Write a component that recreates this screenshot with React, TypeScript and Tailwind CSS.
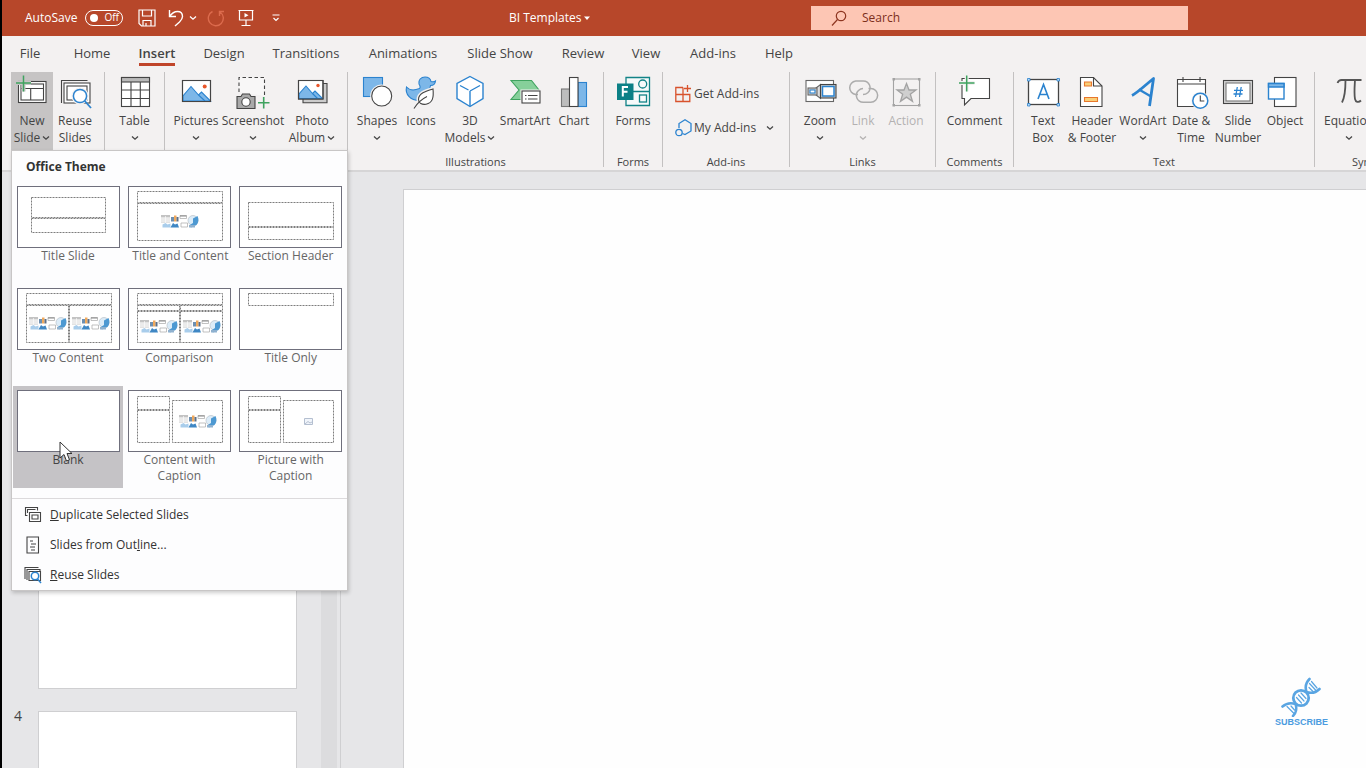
import React from "react";

const INK = "#444444";
const BLUE = "#2b83cf";
const SKY = "#7db7e8";
const GREEN = "#3fa35f";

function Icon({ children }: { children: React.ReactNode }) {
  return (
    <svg aria-hidden="true" className="h-9 w-[34px] shrink-0 overflow-visible" viewBox="0 0 34 36" fill="none" stroke={INK} strokeWidth="1.1">
      {children}
    </svg>
  );
}

const icons = {
  newSlide: (
    <Icon>
      <rect x="3.5" y="7.5" width="27.5" height="21" fill="#fff" />
      <rect x="6" y="10" width="22.5" height="16" />
      <path d="M6 14.5h22.5M15.7 14.5V26" />
      <path d="M8.5 1.5v16M1 9h15" stroke="#c6c4c4" strokeWidth="4" />
      <path d="M8.5 1.5v16M1 9h15" stroke={GREEN} strokeWidth="1.5" />
    </Icon>
  ),
  reuse: (
    <Icon>
      <path d="M3.5 29V6.5h26" />
      <rect x="6" y="9" width="26" height="20" fill="#fff" />
      <rect x="9" y="12" width="20" height="14" />
      <circle cx="22" cy="22" r="8" fill="#f3f1f1" stroke="#f3f1f1" />
      <circle cx="22" cy="22" r="6.6" fill="#fff" stroke={BLUE} strokeWidth="1.5" />
      <path d="M26.8 27l6.2 7" stroke={BLUE} strokeWidth="1.8" />
    </Icon>
  ),
  table: (
    <Icon>
      <rect x="3.5" y="3.5" width="28" height="29" fill="#fff" />
      <rect x="3.5" y="3.5" width="28" height="4.5" fill="#b9b9b9" />
      <path d="M13 8v24.5M22.3 8v24.5M3.5 16h28M3.5 24.5h28" />
    </Icon>
  ),
  pictures: (
    <Icon>
      <rect x="3.5" y="6.5" width="28" height="21" fill="#fff" />
      <path d="M4 27V22l8-9.500 7.500 8.500 3-3 9 9z" fill={SKY} stroke={BLUE} />
      <path d="M19.500 21l6.500 6" stroke={BLUE} />
      <path d="M3.5 6.500h28v21H3.500z" />
      <circle cx="25.700" cy="12.500" r="2" fill="#e8562a" stroke="none" />
    </Icon>
  ),
  screenshot: (
    <Icon>
      <path d="M3 18V3.500h25.500V22" strokeDasharray="3.500 2.500" fill="#f8f7f7" />
      <path d="M1 22.500h4l1.500-2.500h7l1.500 2.500h4v12H1z" fill="#a9a9a9" />
      <circle cx="10" cy="28" r="4.200" fill="#fff" />
      <path d="M27.700 23v11.500M22 28.700h11.500" stroke={GREEN} strokeWidth="1.600" />
    </Icon>
  ),
  album: (
    <Icon>
      <path d="M8 25v3.700h24V9.500h-4" fill="#ccc" />
      <rect x="3.500" y="6.500" width="24.500" height="18.500" fill="#fff" />
      <path d="M4 24.500V20l7-8 6.500 7.500 2.500-2.500 7.500 7.500z" fill={SKY} stroke={BLUE} />
      <path d="M17.500 19.500l5 5" stroke={BLUE} />
      <path d="M3.500 6.500h24.500v18.500H3.500z" />
      <circle cx="23" cy="11.500" r="1.700" fill="#e8562a" stroke="none" />
    </Icon>
  ),
  shapes: (
    <Icon>
      <rect x="3.500" y="3.500" width="19" height="19" fill={SKY} stroke={BLUE} />
      <circle cx="21.700" cy="22" r="11.500" fill="#f3f1f1" stroke="none" />
      <circle cx="21.700" cy="22" r="10" fill="#fff" />
    </Icon>
  ),
  duck: (
    <Icon>
      <path d="M15 10c-1-4 2-7 6-7 3.500 0 5.500 2 6 4.500 2 .5 3.500.3 4.500-.5-.3 3-2.500 4.500-5 4.500-1 2-1 3 0 5 1 6-4 10-11 10C6 26.500 1 20 2.500 13c3 3.500 8 3.500 13 1.500 1-.8 1-2-.5-4.500z" fill={SKY} stroke={BLUE} />
      <path d="M29.500 15c.8 8 0 14-7 15.500-4 .8-8-1-8-5 0-6 7-8.500 15-10.500z" fill="#fff" stroke="#f3f1f1" strokeWidth="4" />
      <path d="M29 15c.8 8 0 14-7 15.200-4 .6-7.500-1-7.500-4.700 0-6 7-8.300 14.500-10.500z" fill="#fff" />
      <path d="M10 34.500c3-5 7-9 13-12" />
    </Icon>
  ),
  cube: (
    <Icon>
      <path d="M17 2.500l13 7v15l-13 8-13-8v-15z" fill="#fff" stroke={BLUE} strokeWidth="1.400" />
      <path d="M7 11.500l8.500 4.500M27 11.500l-10 5.500M17 17v15" stroke={BLUE} strokeWidth="1.400" />
    </Icon>
  ),
  smartArt: (
    <Icon>
      <path d="M3 6.500h20.500L31 16l-7.500 9.500H3l8-9.500z" fill="#86d09a" stroke={GREEN} />
      <rect x="12.500" y="15.500" width="21" height="15.500" fill="#f3f1f1" stroke="none" />
      <rect x="14" y="17" width="18" height="12" fill="#fff" />
      <path d="M17 21.500h1.500M20 21.500h9.500M17 25h1.500M20 25h9.500" />
    </Icon>
  ),
  chart: (
    <Icon>
      <rect x="4.500" y="15" width="8" height="17.500" fill="#bdbdbd" stroke="#777" />
      <rect x="21" y="8.500" width="8.500" height="24" fill={SKY} stroke={BLUE} />
      <rect x="12.500" y="3.500" width="8.500" height="29" fill="#fff" />
    </Icon>
  ),
  forms: (
    <Icon>
      <g stroke="#128387" strokeWidth="1.300">
        <path d="M10 3.500h23.500v28H10zM17 17.500h16.500" fill="#f6fafa" />
        <circle cx="26.700" cy="10" r="4" />
        <rect x="23.500" y="21" width="7" height="7" />
      </g>
      <rect x="1" y="9.500" width="16.500" height="16.500" fill="#0c8086" stroke="none" />
      <path d="M6.800 22.500V13H12M6.800 17.700h4.700" stroke="#fff" strokeWidth="2" />
    </Icon>
  ),
  zoom: (
    <Icon>
      <rect x="3" y="6.500" width="27.500" height="21" fill="#fff" stroke="#666" />
      <path d="M13 14l4.500-3.500v14L13 21z" fill="#ddd" stroke="#666" />
      <rect x="5" y="14" width="9" height="7" fill="#ccc" stroke="#666" />
      <rect x="7" y="16" width="5" height="3" fill="#fff" stroke={BLUE} />
      <rect x="17.500" y="10.500" width="15.500" height="13.500" fill="#ccc" />
      <rect x="19.500" y="12.500" width="11.500" height="9.500" fill="#fff" stroke={BLUE} strokeWidth="1.500" />
    </Icon>
  ),
  link: (
    <Icon>
      <g stroke="#acacac" strokeWidth="1.500">
        <path d="M12 20.500H9.700A6.800 6.800 0 0 1 9.700 7h7.600a6.700 6.700 0 0 1 4.500 11.700c-1.400 1.200-2.800 1.800-4.800 1.800" />
        <path d="M22.500 14.500h2.300a6.800 6.800 0 0 1 0 13.700h-7.600A6.800 6.800 0 0 1 12.500 16.500c1.400-1.300 2.800-2 4.500-2" />
      </g>
    </Icon>
  ),
  action: (
    <Icon>
      <g stroke="#a3a3a3">
        <rect x="4.500" y="5" width="26" height="26.500" />
        <path d="M17.500 9.500l2.500 6.500h7l-5.700 4.300 2.200 7-6-4.200-6 4.200 2.200-7L8 16h7z" fill="#cfcfcf" strokeWidth="1.300" />
        <path d="M3.500 4h2.500v2.500H3.500zM29 4h2.500v2.500H29zM3.500 30h2.500v2.500H3.500zM29 30h2.500v2.500H29z" fill="#a3a3a3" stroke="none" />
      </g>
    </Icon>
  ),
  comment: (
    <Icon>
      <path d="M4 4.500h27.500v20H13l-6.500 6.500v-6.500H4z" fill="#fff" />
      <path d="M8.700 1.500v16M1 9h15.500" stroke="#f3f1f1" strokeWidth="4" />
      <path d="M8.700 1.500v16M1 9h15.500" stroke={GREEN} strokeWidth="1.500" />
    </Icon>
  ),
  textBox: (
    <Icon>
      <rect x="2.500" y="5.500" width="30" height="25" fill="#fff" strokeWidth="1.300" />
      <path d="M12 25l5.500-14.500L23 25M13.800 20.500h7.400" stroke={BLUE} strokeWidth="1.600" />
      <path d="M1.500 4.500h2.500v2.500H1.500zM31 4.500h2.500v2.500H31zM1.500 29.500h2.500v2.500H1.500zM31 29.500h2.500v2.500H31z" fill="#b8daf6" stroke={BLUE} strokeWidth="0.800" />
    </Icon>
  ),
  headerFooter: (
    <Icon>
      <path d="M5.500 3.500h13l8.500 8.500v20.500H5.500z" fill="#fff" />
      <path d="M18.500 3.500V12H27" />
      <path d="M9.500 8h7v4h-7zM9.500 23.500h13v4h-13z" fill="#f9cf78" stroke="#e8762c" />
    </Icon>
  ),
  wordArt: (
    <Icon>
      <path d="M6 21.500C11 19 19 11.500 27.500 4.500L23.500 32" stroke={BLUE} strokeWidth="2.800" strokeLinejoin="round" />
      <path d="M13 15.500l12 7" stroke={BLUE} strokeWidth="2.200" />
    </Icon>
  ),
  dateTime: (
    <Icon>
      <path d="M3.500 5.500h28v27h-28z" fill="#fff" />
      <path d="M3.500 10h28M9 3v5M26 3v5" />
      <circle cx="26.300" cy="26.700" r="9" fill="#f3f1f1" stroke="none" />
      <circle cx="26.300" cy="26.700" r="7.500" fill="#fff" stroke={BLUE} strokeWidth="1.500" />
      <path d="M26.300 21.500v5.500h4" />
    </Icon>
  ),
  slideNumber: (
    <Icon>
      <rect x="2.500" y="6.500" width="29" height="23" fill="#d6d6d6" />
      <rect x="5" y="9" width="24" height="18" fill="#fff" stroke="#777" />
      <path d="M16.300 13l-1.700 10M20.200 13l-1.700 10M13 16.300h9M12.500 20h9" stroke={BLUE} strokeWidth="1.300" />
    </Icon>
  ),
  object: (
    <Icon>
      <rect x="6.500" y="3.500" width="21.500" height="29" fill="#fff" />
      <rect x="0.500" y="9.500" width="15.500" height="15.500" fill="#fff" stroke={BLUE} strokeWidth="1.400" />
      <path d="M0.500 9.500H16V13H0.500z" fill={SKY} stroke={BLUE} strokeWidth="1.400" />
    </Icon>
  ),
  equation: (
    <Icon>
      <path d="M5.500 9c1-2.500 2-3 4-3h20M13.500 6c0 10-.5 17-3.500 22.500M23 6c-.5 8-1 14 0 19 .6 3 3.500 4 6 1.500" strokeWidth="1.800" stroke="#555" />
    </Icon>
  ),
};

function Chevron() {
  return (
    <svg aria-hidden="true" className="inline-block h-2 w-2 align-middle" viewBox="0 0 8 8" fill="none" stroke="currentColor" strokeWidth="1.300">
      <path d="M1 2.500l3 2.700 3-2.700" />
    </svg>
  );
}

type ToolProps = { icon: React.ReactNode; label: string; second?: string; arrow?: boolean; width: string; look?: string };

function Tool({ icon, label, second, arrow, width, look = "" }: ToolProps) {
  return (
    <button className={`flex h-[78px] shrink-0 flex-col items-center pt-0.5 text-xs leading-[17px] whitespace-nowrap ${width} ${look}`}>
      {icon}
      <span className="mt-0.5">{label}</span>
      {(second || arrow) && (
        <span className="flex h-[17px] items-center gap-0.5">
          {second}
          {arrow && <Chevron />}
        </span>
      )}
    </button>
  );
}

function Group({ label, width, className = "", children }: { label?: string; width: string; className?: string; children: React.ReactNode }) {
  return (
    <section className={`flex h-[95px] shrink-0 flex-col justify-between border-r border-[#c3c1c1] ${width}`}>
      <div className={`flex ${className}`}>{children}</div>
      {label && <div className="text-center text-[11px] leading-[10px]">{label}</div>}
    </section>
  );
}

const tabs = [
  { name: "File", width: "w-[38px]" },
  { name: "Home", width: "w-[86px]" },
  { name: "Insert", width: "w-[44px]" },
  { name: "Design", width: "w-[90px]" },
  { name: "Transitions", width: "w-[74px]" },
  { name: "Animations", width: "w-[120px]" },
  { name: "Slide Show", width: "w-[74px]" },
  { name: "Review", width: "w-[92px]" },
  { name: "View", width: "w-[34px]" },
  { name: "Add-ins", width: "w-[100px]" },
  { name: "Help", width: "w-[32px]" },
];

function TitleBar() {
  return (
    <header className="flex h-9 shrink-0 items-center bg-[#b7472a] text-xs text-white">
      <div className="flex w-[507px] shrink-0 items-center pl-[23px]">
        <span>AutoSave</span>
        <button role="switch" aria-checked="false" aria-label="AutoSave" className="ml-2 flex h-4 w-[38px] items-center gap-1.5 rounded-full border border-white pl-1 text-[10px]">
          <span className="size-2 rounded-full bg-white" />
          Off
        </button>
        <button aria-label="Save" className="ml-[15px]">
          <svg className="size-[18px]" viewBox="0 0 18 18" fill="none" stroke="#fff" strokeWidth="1.200">
            <path d="M1 1h16v16H3.500L1 14.500zM4.500 1v6h9V1M5 17v-5.500h8V17M8 17v-3" />
          </svg>
        </button>
        <button aria-label="Undo" className="ml-3">
          <svg className="h-[18px] w-4" viewBox="0 0 16 18" fill="none" stroke="#fff" strokeWidth="1.400">
            <path d="M1.500 1v6.500H8M1.500 7.500C4 4 6.500 2.500 9.500 2.500c3.500 0 5 2.500 5 5 0 2-1 3.500-3 5.500L7 17" />
          </svg>
        </button>
        <button aria-label="Undo history" className="ml-[5px] flex"><Chevron /></button>
        <button aria-label="Redo" className="ml-2.5">
          <svg className="size-[18px]" viewBox="0 0 18 18" fill="none" stroke="#dc6b4d" strokeWidth="1.400">
            <path d="M5.500 2.500a7.500 7.500 0 1 0 7.500.5M17 2.500h-4.500V7" />
          </svg>
        </button>
        <button aria-label="Start from beginning" className="ml-3">
          <svg className="size-[18px]" viewBox="0 0 18 18" fill="none" stroke="#fff" strokeWidth="1.200">
            <path d="M1.500 1.500h15M2.500 1.500v9.500h13V1.500M9 11v5.500M4.500 16.500h9" />
            <path d="M7.500 4v4.500l4-2.200z" fill="#fff" stroke="none" />
          </svg>
        </button>
        <button aria-label="Customize toolbar" className="ml-4">
          <svg className="h-2.5 w-2.5" viewBox="0 0 10 10" fill="none" stroke="#fff" strokeWidth="1.200">
            <path d="M1.500 2h7M2.500 5L5 7.500 7.500 5" />
          </svg>
        </button>
      </div>
      <button className="flex w-[302px] shrink-0 items-center">
        BI Templates
        <svg aria-hidden="true" className="ml-[3px] h-1.5 w-1.5" viewBox="0 0 6 6"><path d="M0 1.500h6L3 5z" fill="#fff" /></svg>
      </button>
      <label className="flex h-6 w-[377px] items-center bg-[#fdc6b4] pl-5 text-[#7c2f1c]">
        <svg aria-hidden="true" className="h-4 w-4" viewBox="0 0 16 16" fill="none" stroke="#8d3520" strokeWidth="1.200">
          <circle cx="10" cy="6" r="4.700" />
          <path d="M6.500 9.500L1 15.500" />
        </svg>
        <input aria-label="Search" placeholder="Search" className="ml-[15px] min-w-0 flex-1 bg-transparent outline-none placeholder:text-[#7c2f1c]" />
      </label>
    </header>
  );
}

function Ribbon() {
  return (
    <div className="flex h-[104px] shrink-0 overflow-hidden border-b-2 border-[#d6d5d6] bg-[#f3f1f1] pt-1 pl-[9px]">
      <Group width="w-[94px]">
        <Tool icon={icons.newSlide} label="New" second="Slide" arrow width="w-[42px]" look="bg-[#c6c4c4]" />
        <Tool icon={icons.reuse} label="Reuse" second="Slides" width="w-11" />
      </Group>
      <Group width="w-[60px]">
        <Tool icon={icons.table} label="Table" arrow width="w-full" />
      </Group>
      <Group width="w-[183px]" className="pl-1">
        <Tool icon={icons.pictures} label="Pictures" arrow width="w-[54px]" />
        <Tool icon={icons.screenshot} label="Screenshot" arrow width="w-[60px]" />
        <Tool icon={icons.album} label="Photo" second="Album" arrow width="w-[58px]" />
      </Group>
      <Group label="Illustrations" width="w-64" className="pl-1.5">
        <Tool icon={icons.shapes} label="Shapes" arrow width="w-[46px]" />
        <Tool icon={icons.duck} label="Icons" width="w-[42px]" />
        <Tool icon={icons.cube} label="3D" second="Models" arrow width="w-14" />
        <Tool icon={icons.smartArt} label="SmartArt" width="w-[54px]" />
        <Tool icon={icons.chart} label="Chart" width="w-11" />
      </Group>
      <Group label="Forms" width="w-[59px]">
        <Tool icon={icons.forms} label="Forms" width="w-full" />
      </Group>
      <Group label="Add-ins" width="w-[127px]" className="flex-col gap-3.5 pt-3 pl-3 text-xs">
        <button className="flex h-5 items-center gap-[3px]">
          <svg aria-hidden="true" className="h-[18px] w-4" viewBox="0 0 16 18" fill="none" stroke="#d8522c" strokeWidth="1.300">
            <path d="M8 2.500H.8v14h14V9.500H.8M8 2.500v14M12.500 0v7M9 3.500h7" />
          </svg>
          Get Add-ins
        </button>
        <button className="flex h-5 items-center gap-0.5">
          <svg aria-hidden="true" className="h-[18px] w-[17px]" viewBox="0 0 17 18" fill="none" stroke={BLUE} strokeWidth="1.300">
            <path d="M4 9V4.500l6-3.700 6 3.700v7.500l-6 3.500-2.500-1" />
            <circle cx="4" cy="13.500" r="3.200" />
          </svg>
          My Add-ins
          <span className="ml-2 flex"><Chevron /></span>
        </button>
      </Group>
      <Group label="Links" width="w-[146px]" className="pl-2">
        <Tool icon={icons.zoom} label="Zoom" arrow width="w-11" />
        <Tool icon={icons.link} label="Link" arrow width="w-[42px]" look="text-[#b3b1b1]" />
        <Tool icon={icons.action} label="Action" width="w-11" look="text-[#b3b1b1]" />
      </Group>
      <Group label="Comments" width="w-[78px]">
        <Tool icon={icons.comment} label="Comment" width="w-full" />
      </Group>
      <Group label="Text" width="w-[301px]" className="pl-1.5">
        <Tool icon={icons.textBox} label="Text" second="Box" width="w-[46px]" />
        <Tool icon={icons.headerFooter} label="Header" second="& Footer" width="w-[52px]" />
        <Tool icon={icons.wordArt} label="WordArt" arrow width="w-[50px]" />
        <Tool icon={icons.dateTime} label="Date &" second="Time" width="w-[46px]" />
        <Tool icon={icons.slideNumber} label="Slide" second="Number" width="w-12" />
        <Tool icon={icons.object} label="Object" width="w-[46px]" />
      </Group>
      <Group label="Symbols" width="w-[118px]">
        <Tool icon={icons.equation} label="Equation" arrow width="w-[68px]" />
      </Group>
    </div>
  );
}

function ContentGlyphs({ x, y }: { x: number; y: number }) {
  return (
    <g transform={`translate(${x} ${y})`} stroke="none">
      <path d="M0 0h9v8H0z" fill="#e3e3e3" />
      <path d="M0 0h9v2H0z" fill="#c3c3c3" />
      <path d="M0 4h9M0 6h9M4.500 1v7" stroke="#fff" strokeWidth="0.600" />
      <path d="M1.500 12.500V9.500l3-1.500 2 1.500 3-1V12.500z" fill="#a9cdeb" />
      <path d="M10 2h3v4.500h-3z" fill="#6e8fb0" />
      <path d="M13 .5h2.500V6.500H13z" fill="#f0a95c" />
      <path d="M15.500 2h2v4.500h-2z" fill="#5c6f87" />
      <path d="M9.500 12.500l2.500-4.500 2 1.500 2.500-1 1.500 4z" fill="#3f87c4" />
      <path d="M19 .5h6.500V3.500H19zM20 8h6.500v4H20z" fill="#fff" stroke="#a8a8a8" strokeWidth="0.700" />
      <path d="M19 1h6.500" stroke="#888" />
      <circle cx="32" cy="5.500" r="5" fill="#dcecf8" stroke="#b1b9c0" strokeWidth="0.600" />
      <path d="M32 3.500L36.500 1c1.500 3 1.200 6.500-1 9l-5.500 2.500-2-2 4-2.500z" fill="#4d99d2" />
      <path d="M28 10h6v2.500h-6z" fill="#8fb1cf" />
    </g>
  );
}

type Layout = { name: string; boxes: [number, number, number, number][]; glyphs?: [number, number][]; picture?: boolean; active?: boolean };

const layouts: Layout[] = [
  { name: "Title Slide", boxes: [[14, 11, 74, 20], [14, 32, 74, 14]] },
  { name: "Title and Content", boxes: [[9, 5, 85, 11], [9, 17, 85, 37]], glyphs: [[33, 29]] },
  { name: "Section Header", boxes: [[9, 16, 85, 24], [9, 41, 85, 12]] },
  { name: "Two Content", boxes: [[9, 5, 85, 11], [9, 17, 42, 37], [52, 17, 42, 37]], glyphs: [[12, 29], [55, 29]] },
  { name: "Comparison", boxes: [[9, 5, 85, 11], [9, 17, 42, 5], [52, 17, 42, 5], [9, 23, 42, 31], [52, 23, 42, 31]], glyphs: [[12, 32], [55, 32]] },
  { name: "Title Only", boxes: [[9, 5, 85, 12]] },
  { name: "Blank", boxes: [], active: true },
  { name: "Content with Caption", boxes: [[9, 6, 32, 13], [9, 20, 32, 32], [44, 10, 50, 42]], glyphs: [[51, 25]] },
  { name: "Picture with Caption", boxes: [[9, 6, 32, 13], [9, 20, 32, 32], [44, 10, 50, 42]], picture: true },
];

function LayoutTile({ layout }: { layout: Layout }) {
  return (
    <button className={`flex h-[102px] w-[110px] flex-col items-center px-1 pt-1 ${layout.active ? "bg-[#c5c3c6] text-[#444]" : "text-[#666]"}`}>
      <svg aria-hidden="true" className="h-[62px] w-[103px] shrink-0" viewBox="0 0 103 62" fill="none">
        <rect x="0.500" y="0.500" width="102" height="61" fill="#fff" stroke="#6f6f7c" />
        <g stroke="#7d7d7d" strokeDasharray="2 1">
          {layout.boxes.map(([x, y, w, h], i) => (
            <rect key={i} x={x + 0.5} y={y + 0.5} width={w} height={h} />
          ))}
        </g>
        {layout.glyphs?.map(([x, y], i) => <ContentGlyphs key={i} x={x} y={y} />)}
        {layout.picture && <path d="M65.500 28.500h8v6h-8zM66 34l3-2.500 2 1.500 2-1" stroke="#b4bfd0" fill="#f1f5fb" />}
      </svg>
      <span className="w-[94px] text-center text-xs leading-4 text-nowrap">
        {layout.name.includes("with") ? (
          <>
            {layout.name.replace(" Caption", "")}
            <br />
            Caption
          </>
        ) : (
          layout.name
        )}
      </span>
    </button>
  );
}

function MenuRow({ icon, children }: { icon: React.ReactNode; children: React.ReactNode }) {
  return (
    <button className="flex h-[30px] w-full items-center gap-2 pl-3 text-left text-xs text-[#333]">
      <svg aria-hidden="true" className="h-[18px] w-[18px]" viewBox="0 0 18 18" fill="none" stroke={INK} strokeWidth="1.100">
        {icon}
      </svg>
      <span>{children}</span>
    </button>
  );
}

function LayoutMenu() {
  return (
    <div className="absolute top-[150px] left-[9px] z-10 w-[337px] border border-[#c8c6c6] bg-[#fdfdfe] shadow-[1px_2px_4px_rgba(0,0,0,0.2)]">
      <h2 className="h-[31px] pl-3.5 text-xs leading-[31px] font-bold text-[#333]">Office Theme</h2>
      <div className="grid grid-cols-3 gap-x-px px-px">
        {layouts.map((layout) => <LayoutTile key={layout.name} layout={layout} />)}
      </div>
      <div className="mt-2.5 border-t border-[#dcdadc] pt-px">
        <MenuRow icon={<><path d="M3.500 9.500h-2v-8h12v3" /><path d="M3.500 7V3.500h8" /><path d="M5.500 6.500h11v9h-11zM8 9h6v4H8z" fill="#fff" /></>}>
          <u>D</u>uplicate Selected Slides
        </MenuRow>
        <MenuRow icon={<path d="M3 1h11.500v16H3zM6 5h3M7 8h5M6 11h5M7 14h4" />}>
          Slides from Out<u>l</u>ine...
        </MenuRow>
        <MenuRow icon={<><path d="M1 13V1.500h13.500M3 14V3.500h13V8" /><path d="M5 5.500h11.500v9H5z" fill="#fff" /><circle cx="11" cy="10" r="3.700" fill="#fff" stroke={BLUE} strokeWidth="1.500" /><path d="M13.500 13l3.500 4" stroke={BLUE} strokeWidth="1.500" /></>}>
          <u>R</u>euse Slides
        </MenuRow>
      </div>
    </div>
  );
}

function DnaLogo() {
  return (
    <svg aria-hidden="true" className="h-10 w-10" viewBox="0 0 40 40" fill="none" stroke="#5aa5e2" strokeLinecap="round">
      <circle cx="20" cy="21" r="7.700" strokeWidth="2.800" />
      <path d="M25.500 15c-1.500-4.500-.5-9.500 3-13M25.500 15c4.500 1.500 9.500.500 13-3M14.500 27c-4.500-1.500-9.500-.5-13 2.500M14.500 27c1.500 4.500.5 9.500-2.500 12" strokeWidth="2.600" />
      <path d="M15.500 20.500l5 5.500M17.500 18l5.500 6M20 16l5 5.500M28 10.500l4 4M28.500 6.500l6.500 7M30.500 4.500l5.500 6.500M6 29.500l7 7M10 29l3.500 4" strokeWidth="1.200" />
    </svg>
  );
}

export default function App() {
  return (
    <div className="relative flex h-screen flex-col overflow-hidden border-l-2 border-black bg-[#e6e6e8] font-['Open_Sans','Noto_Sans',sans-serif] text-[#444]">
      <TitleBar />
      <nav className="flex h-8 shrink-0 bg-[#f3f1f1] pl-[9px] text-[13px]">
        {tabs.map(({ name, width }) => (
          <a key={name} href={`#${name}`} className={`flex h-[30px] shrink-0 justify-center whitespace-nowrap ${width}`}>
            <span className={`border-b-[3px] pt-2 leading-[19px] ${name === "Insert" ? "border-[#c0452a] font-semibold" : "border-transparent"}`}>{name}</span>
          </a>
        ))}
      </nav>
      <Ribbon />
      <main className="flex min-h-0 flex-1">
        <aside className="flex w-[339px] shrink-0 justify-between overflow-hidden border-r border-[#cfcfd1] pr-[3px]">
          <ol className="flex flex-col gap-[22px] pt-[370px] pl-3 text-sm">
            {["", "4"].map((n) => (
              <li key={n} className="flex shrink-0 items-start">
                <span className="w-6 leading-[10px]">{n}</span>
                <span className="h-[147px] w-[259px] border border-[#cfcfd1] bg-white" />
              </li>
            ))}
          </ol>
          <div className="w-4 bg-[#dcdcde]" />
        </aside>
        <div className="relative flex flex-1 pt-[17px] pl-[62px]">
          <div className="flex-1 border-t border-l border-[#cfcfd1] bg-[#fefefe]" />
          <div className="absolute right-[38px] bottom-[41px] flex flex-col items-center text-[#4b9be0]">
            <DnaLogo />
            <span className="font-['Liberation_Sans',sans-serif] text-[9px] leading-[10px] font-bold">SUBSCRIBE</span>
          </div>
        </div>
      </main>
      <LayoutMenu />
      <svg aria-hidden="true" className="absolute top-[441px] left-[57px] z-20 h-[22px] w-[14px]" viewBox="0 0 14 22">
        <path d="M1 1v16l4-3.500 2.500 6.500 3-1.200L8 12.500h5z" fill="#fff" stroke="#333" strokeWidth="1" />
      </svg>
    </div>
  );
}
